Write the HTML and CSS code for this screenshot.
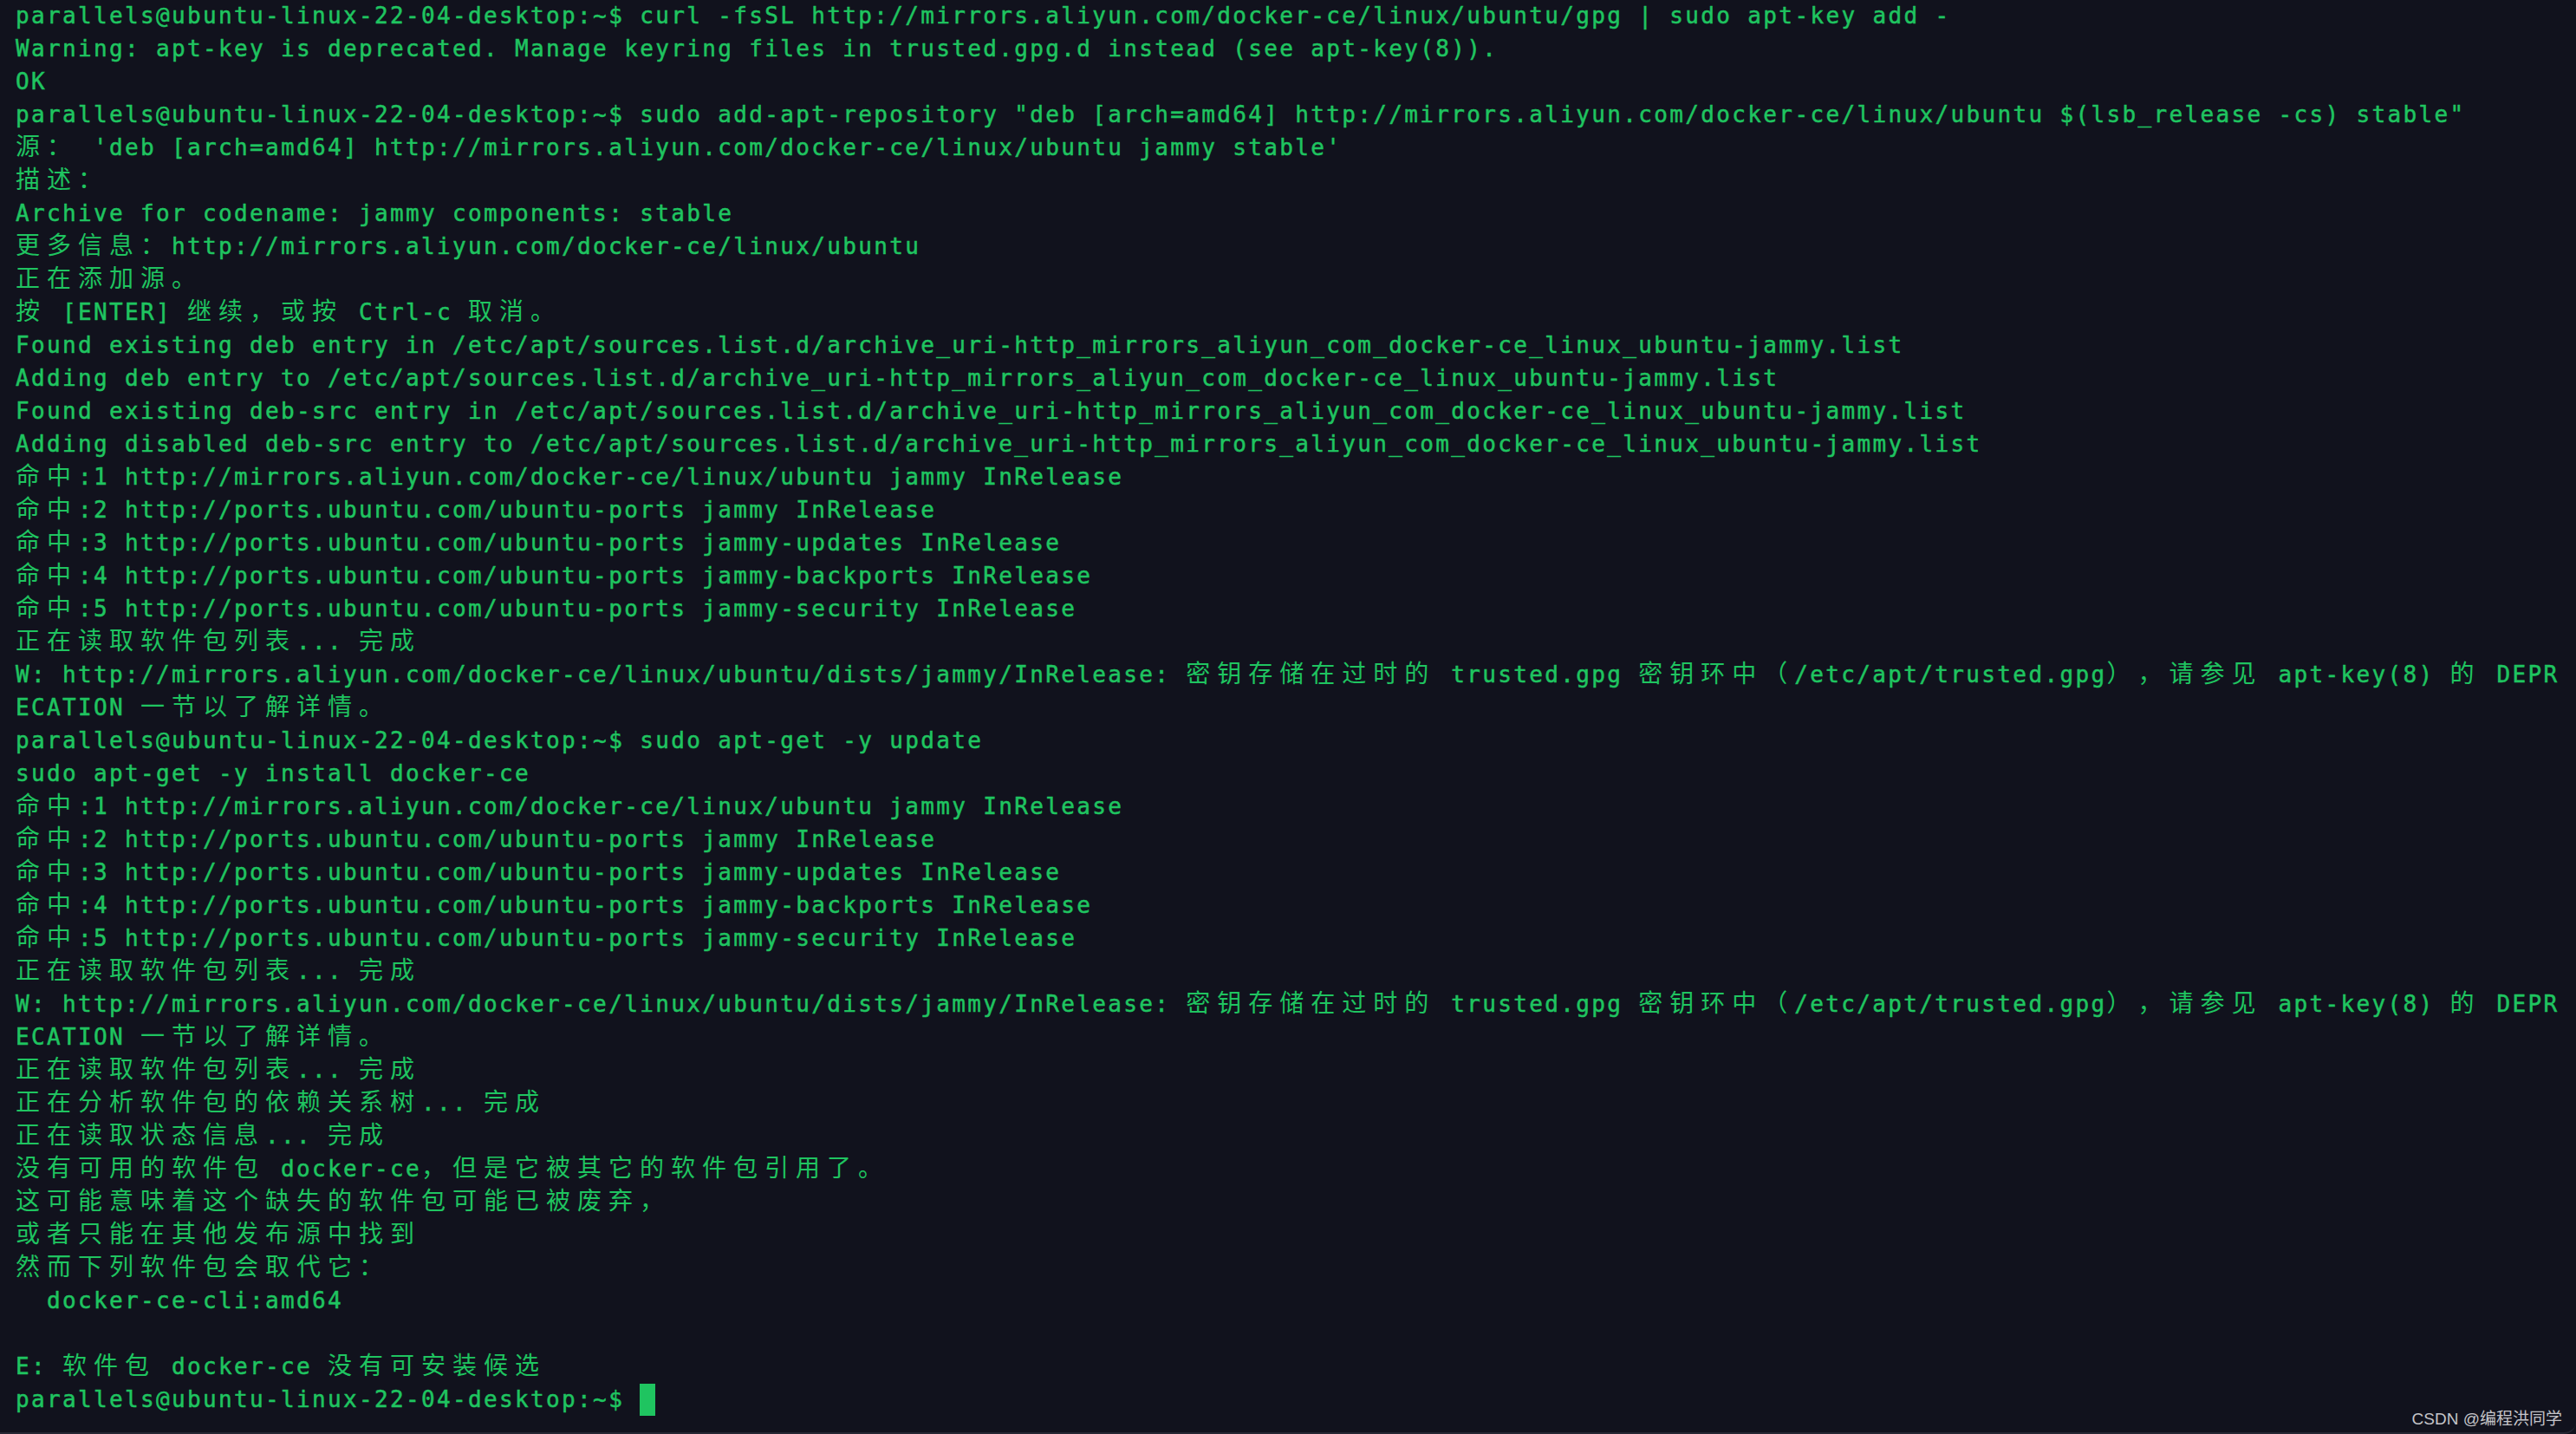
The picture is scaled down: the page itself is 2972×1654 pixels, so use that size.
FILE: index.html
```html
<!DOCTYPE html>
<html lang="zh-CN">
<head>
    <meta charset="UTF-8">
    <meta name="viewport" content="width=device-width, initial-scale=1.0">
    <title>Terminal</title>
    <link rel="stylesheet" href="styles.css">
</head>
<body>
    <div class="terminal">
        <div class="output">
            <div class="line">parallels@ubuntu-linux-22-04-desktop:~$ curl -fsSL http://mirrors.aliyun.com/docker-ce/linux/ubuntu/gpg | sudo apt-key add -</div>
            <div class="line">Warning: apt-key is deprecated. Manage keyring files in trusted.gpg.d instead (see apt-key(8)).</div>
            <div class="line">OK</div>
            <div class="line">parallels@ubuntu-linux-22-04-desktop:~$ sudo add-apt-repository "deb [arch=amd64] http://mirrors.aliyun.com/docker-ce/linux/ubuntu $(lsb_release -cs) stable"</div>
            <div class="line"><span class="zh">源：</span> 'deb [arch=amd64] http://mirrors.aliyun.com/docker-ce/linux/ubuntu jammy stable'</div>
            <div class="line"><span class="zh">描述：</span></div>
            <div class="line">Archive for codename: jammy components: stable</div>
            <div class="line"><span class="zh">更多信息：</span>http://mirrors.aliyun.com/docker-ce/linux/ubuntu</div>
            <div class="line"><span class="zh">正在添加源。</span></div>
            <div class="line"><span class="zh">按</span> [ENTER] <span class="zh">继续，或按</span> Ctrl-c <span class="zh">取消。</span></div>
            <div class="line">Found existing deb entry in /etc/apt/sources.list.d/archive_uri-http_mirrors_aliyun_com_docker-ce_linux_ubuntu-jammy.list</div>
            <div class="line">Adding deb entry to /etc/apt/sources.list.d/archive_uri-http_mirrors_aliyun_com_docker-ce_linux_ubuntu-jammy.list</div>
            <div class="line">Found existing deb-src entry in /etc/apt/sources.list.d/archive_uri-http_mirrors_aliyun_com_docker-ce_linux_ubuntu-jammy.list</div>
            <div class="line">Adding disabled deb-src entry to /etc/apt/sources.list.d/archive_uri-http_mirrors_aliyun_com_docker-ce_linux_ubuntu-jammy.list</div>
            <div class="line"><span class="zh">命中</span>:1 http://mirrors.aliyun.com/docker-ce/linux/ubuntu jammy InRelease</div>
            <div class="line"><span class="zh">命中</span>:2 http://ports.ubuntu.com/ubuntu-ports jammy InRelease</div>
            <div class="line"><span class="zh">命中</span>:3 http://ports.ubuntu.com/ubuntu-ports jammy-updates InRelease</div>
            <div class="line"><span class="zh">命中</span>:4 http://ports.ubuntu.com/ubuntu-ports jammy-backports InRelease</div>
            <div class="line"><span class="zh">命中</span>:5 http://ports.ubuntu.com/ubuntu-ports jammy-security InRelease</div>
            <div class="line"><span class="zh">正在读取软件包列表</span>... <span class="zh">完成</span></div>
            <div class="line">W: http://mirrors.aliyun.com/docker-ce/linux/ubuntu/dists/jammy/InRelease: <span class="zh">密钥存储在过时的</span> trusted.gpg <span class="zh">密钥环中（</span>/etc/apt/trusted.gpg<span class="zh">），请参见</span> apt-key(8) <span class="zh">的</span> DEPR</div>
            <div class="line">ECATION <span class="zh">一节以了解详情。</span></div>
            <div class="line">parallels@ubuntu-linux-22-04-desktop:~$ sudo apt-get -y update</div>
            <div class="line">sudo apt-get -y install docker-ce</div>
            <div class="line"><span class="zh">命中</span>:1 http://mirrors.aliyun.com/docker-ce/linux/ubuntu jammy InRelease</div>
            <div class="line"><span class="zh">命中</span>:2 http://ports.ubuntu.com/ubuntu-ports jammy InRelease</div>
            <div class="line"><span class="zh">命中</span>:3 http://ports.ubuntu.com/ubuntu-ports jammy-updates InRelease</div>
            <div class="line"><span class="zh">命中</span>:4 http://ports.ubuntu.com/ubuntu-ports jammy-backports InRelease</div>
            <div class="line"><span class="zh">命中</span>:5 http://ports.ubuntu.com/ubuntu-ports jammy-security InRelease</div>
            <div class="line"><span class="zh">正在读取软件包列表</span>... <span class="zh">完成</span></div>
            <div class="line">W: http://mirrors.aliyun.com/docker-ce/linux/ubuntu/dists/jammy/InRelease: <span class="zh">密钥存储在过时的</span> trusted.gpg <span class="zh">密钥环中（</span>/etc/apt/trusted.gpg<span class="zh">），请参见</span> apt-key(8) <span class="zh">的</span> DEPR</div>
            <div class="line">ECATION <span class="zh">一节以了解详情。</span></div>
            <div class="line"><span class="zh">正在读取软件包列表</span>... <span class="zh">完成</span></div>
            <div class="line"><span class="zh">正在分析软件包的依赖关系树</span>... <span class="zh">完成</span></div>
            <div class="line"><span class="zh">正在读取状态信息</span>... <span class="zh">完成</span></div>
            <div class="line"><span class="zh">没有可用的软件包</span> docker-ce<span class="zh">，但是它被其它的软件包引用了。</span></div>
            <div class="line"><span class="zh">这可能意味着这个缺失的软件包可能已被废弃，</span></div>
            <div class="line"><span class="zh">或者只能在其他发布源中找到</span></div>
            <div class="line"><span class="zh">然而下列软件包会取代它：</span></div>
            <div class="line">  docker-ce-cli:amd64</div>
            <div class="line"></div>
            <div class="line">E: <span class="zh">软件包</span> docker-ce <span class="zh">没有可安装候选</span></div>
            <div class="line">parallels@ubuntu-linux-22-04-desktop:~$ <span class="cursor"></span></div>
        </div>
        <div class="watermark">CSDN @编程洪同学</div>
    </div>
</body>
</html>
```

FILE: styles.css
```css
body {
    margin: 0;
    background-color: #11121d;
}

.terminal {
    position: relative;
    height: 1654px;
    box-sizing: border-box;
    padding-left: 18px;
    background-color: #11121d;
    border-bottom: 2px solid #262733;
    border-bottom-right-radius: 14px;
    overflow: hidden;
}

.output {
    margin-top: -1px;
    font-family: "DejaVu Sans Mono", "Liberation Mono", monospace;
    font-size: 26px;
    letter-spacing: 2.35px;
    line-height: 38px;
    color: #1fc460;
    -webkit-text-stroke: 0.5px #1fc460;
}

.line {
    height: 38px;
    white-space: pre;
}

.zh {
    font-family: "Noto Sans CJK SC", sans-serif;
    font-size: 28px;
    letter-spacing: 8px;
    line-height: 1;
    text-spacing-trim: space-all;
    font-feature-settings: "halt" 0, "chws" 0;
    -webkit-text-stroke: 0;
}

.cursor {
    display: inline-block;
    width: 18px;
    height: 37px;
    background-color: #1fc460;
    vertical-align: top;
    margin-top: 1px;
}

.watermark {
    position: absolute;
    right: 16px;
    bottom: 4px;
    font-family: "Liberation Sans", "Noto Sans CJK SC", sans-serif;
    font-size: 19px;
    color: #c4c4c8;
}
```
